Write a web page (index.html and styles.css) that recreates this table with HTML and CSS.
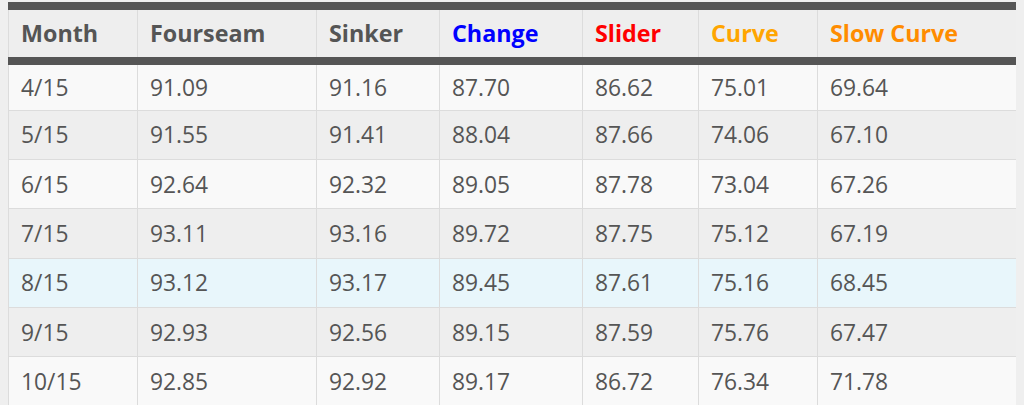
FILE: index.html
```html
<!DOCTYPE html>
<html>
<head>
<meta charset="utf-8">
<link rel="stylesheet" href="styles.css">
</head>
<body>
<table class="pitch-table">
  <colgroup>
    <col class="c-month"><col class="c-four"><col class="c-sink"><col class="c-change"><col class="c-slider"><col class="c-curve"><col class="c-slow">
  </colgroup>
  <thead>
    <tr>
      <th>Month</th>
      <th>Fourseam</th>
      <th>Sinker</th>
      <th class="t-change">Change</th>
      <th class="t-slider">Slider</th>
      <th class="t-curve">Curve</th>
      <th class="t-slow">Slow Curve</th>
    </tr>
  </thead>
  <tbody>
    <tr><td>4/15</td><td>91.09</td><td>91.16</td><td>87.70</td><td>86.62</td><td>75.01</td><td>69.64</td></tr>
    <tr><td>5/15</td><td>91.55</td><td>91.41</td><td>88.04</td><td>87.66</td><td>74.06</td><td>67.10</td></tr>
    <tr><td>6/15</td><td>92.64</td><td>92.32</td><td>89.05</td><td>87.78</td><td>73.04</td><td>67.26</td></tr>
    <tr><td>7/15</td><td>93.11</td><td>93.16</td><td>89.72</td><td>87.75</td><td>75.12</td><td>67.19</td></tr>
    <tr class="hl"><td>8/15</td><td>93.12</td><td>93.17</td><td>89.45</td><td>87.61</td><td>75.16</td><td>68.45</td></tr>
    <tr><td>9/15</td><td>92.93</td><td>92.56</td><td>89.15</td><td>87.59</td><td>75.76</td><td>67.47</td></tr>
    <tr><td>10/15</td><td>92.85</td><td>92.92</td><td>89.17</td><td>86.72</td><td>76.34</td><td>71.78</td></tr>
  </tbody>
</table>
</body>
</html>
```

FILE: styles.css
```css
html, body {
  background: #efefef;
}
body {
  margin: 2px 8px 0 8px;
  font-family: "Open Sans", "Liberation Sans", sans-serif;
  color: #555;
}
.pitch-table {
  border-collapse: collapse;
  table-layout: fixed;
  width: 1009px;
  font-size: 22.8px;
  border: 1px solid #dcdcdc;
  border-top: none;
}
.c-month { width: 129px; }
.c-four { width: 179px; }
.c-sink { width: 123px; }
.c-change { width: 143px; }
.c-slider { width: 116px; }
.c-curve { width: 119px; }
.c-slow { width: auto; }
.pitch-table th {
  background: #eeeeee;
  border-top: 8px solid #555;
  border-bottom: 8px solid #555;
  border-left: 1px solid #dcdcdc;
  border-right: 1px solid #dcdcdc;
  font-weight: 700;
  font-size: 23.3px;
  text-align: left;
  height: 55px;
  padding: 0 12px 1px;
  box-sizing: border-box;
  color: #555;
}
.pitch-table td {
  border: 1px solid #dcdcdc;
  height: 49.3px;
  padding: 0 12px;
  box-sizing: border-box;
  vertical-align: middle;
}
.pitch-table tbody tr:nth-child(odd) td { background: #f9f9f9; }
.pitch-table tbody tr:nth-child(even) td { background: #eeeeee; }
.pitch-table tbody tr.hl td { background: #e8f6fb; }
.t-change { color: #0000ff !important; }
.t-slider { color: #ff0000 !important; }
.t-curve { color: #ffa500 !important; }
.t-slow { color: #ff8c00 !important; }
```
